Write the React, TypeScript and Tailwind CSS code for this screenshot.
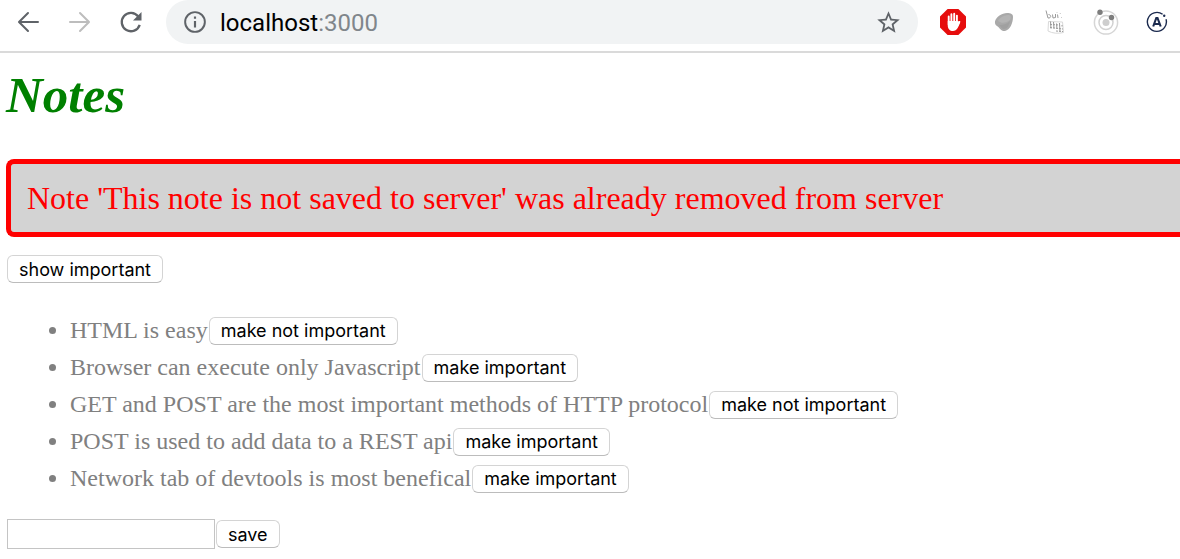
import React, { useState } from "react";

type Note = { id: number; content: string; important: boolean };

const initialNotes: Note[] = [
  { id: 1, content: "HTML is easy", important: true },
  { id: 2, content: "Browser can execute only Javascript", important: false },
  { id: 3, content: "GET and POST are the most important methods of HTTP protocol", important: true },
  { id: 4, content: "POST is used to add data to a REST api", important: false },
  { id: 5, content: "Network tab of devtools is most benefical", important: false },
];

function MaterialIcon({ d, className }: { d: string; className: string }) {
  return (
    <svg viewBox="0 0 24 24" fill="currentColor" className={className} aria-hidden="true">
      <path d={d} />
    </svg>
  );
}

function ArrowIcon({ d }: { d: string }) {
  return (
    <svg viewBox="0 0 28 28" fill="none" stroke="currentColor" strokeWidth="2" strokeLinecap="round" strokeLinejoin="round" className="size-7" aria-hidden="true">
      <path d={d} />
    </svg>
  );
}

function BlockerIcon() {
  return (
    <svg viewBox="0 0 26 26" className="size-[26px]" aria-hidden="true">
      <path d="M7.6 0h10.8L26 7.6v10.8L18.4 26H7.6L0 18.4V7.6z" fill="#e60d0d" />
      <g stroke="#fff" strokeWidth="1.900" strokeLinecap="round" fill="none">
        <path d="M8.700 7.500v8M11.400 5.200v9M14.200 4.800v9M16.900 6.600v9M17.400 16.500l2-3.600" />
      </g>
      <path d="M7.750 12h10.100l2.300 1.200c-.8 2-1.700 4.900-3.200 6.900-1 1.300-2.300 1.900-3.900 1.900-3.200 0-5.300-2.400-5.300-5.600z" fill="#fff" />
    </svg>
  );
}

function StoneIcon() {
  return (
    <svg viewBox="0 0 20 20" className="size-5" aria-hidden="true">
      <path d="M1 9.500C2 5 8 1 13 1c4 0 6 1 6 4 0 6-3 13-8 14-4 .5-5-3-8-5-1.500-1-2.300-2.500-2-4.500z" fill="#a9a9a9" />
      <path d="M4 9c2-4 7-6 11-6 2 0 2 3 1 5-4 3-8 4-12 1z" fill="#b4b4b4" />
      <path d="M5 13c4 0 8-1 11-4-1 5-3 8-6 8-2 0-3-2-5-4z" fill="#a0a0a0" />
    </svg>
  );
}

function SketchIcon() {
  return (
    <svg viewBox="0 0 20 26" className="h-[26px] w-5" fill="none" stroke="#9a9a9a" strokeWidth="1" aria-hidden="true">
      <path d="M1 1.500l2 7.500c3 .5 4-3 .5-3.500M7.500 5.500l.5 3.500 2.500-.5V5M12.500 5.500l.5 3.500M15 4l.3.600M16.500 8.500l.3.500M12 3.500v.500" />
      <path d="M3.500 12.500l14 .5 1 10.500c-5 1.300-11 1-15.500-1.500z" stroke="#d9d9d9" />
      <path d="M5.500 12.500l.5 7M8.500 13l.5 6.500M11.500 14.500l.500 5.500M14.500 14l.500 9" />
      <path d="M5 15.500l10 .5M5 18.500l13 1.500M11 22l7 .5M17 16v1.500" strokeDasharray="2 1" />
    </svg>
  );
}

function OrbitIcon() {
  return (
    <svg viewBox="0 0 26 26" className="size-[26px]" fill="none" aria-hidden="true">
      <circle cx="13" cy="13.500" r="11.600" stroke="#d6d6d6" strokeWidth="1.500" />
      <circle cx="13" cy="13.500" r="7" stroke="#d2d2d2" strokeWidth="1.500" />
      <circle cx="13" cy="13.500" r="3.500" fill="#cecece" />
      <circle cx="7" cy="3.300" r="2.700" fill="#7d7d7d" />
      <circle cx="18.500" cy="8.500" r="2.700" fill="#7d7d7d" />
    </svg>
  );
}

function ApolloIcon() {
  return (
    <svg viewBox="0 0 22 22" className="size-[22px]" fill="none" stroke="#1b2a4e" aria-hidden="true">
      <path d="M20 8.200A9.500 9.500 0 1 1 16.600 3.300" strokeWidth="1.400" />
      <circle cx="18.200" cy="4.700" r="1.200" fill="#1b2a4e" stroke="none" />
      <path d="M7.200 15.500L10.300 7h1.200l3.200 8.500M8.800 13h4.400" strokeWidth="2.100" />
    </svg>
  );
}

function BrowserBar() {
  return (
    <header className="flex h-[53px] items-start border-b-2 border-[#dadada] bg-white pr-[10px]">
      <div className="flex h-11 shrink-0 items-center gap-[23px] pl-[15px] pr-[21px]">
        <button aria-label="Back" className="text-[#5f6368]">
          <ArrowIcon d="M23 14H4.500M13 5l-9 9 9 9" />
        </button>
        <button aria-label="Forward" className="text-[#bdbdbd]">
          <ArrowIcon d="M4 14h18.500M14 5l9 9-9 9" />
        </button>
        <button aria-label="Reload" className="text-[#5f6368]">
          <svg viewBox="0 0 28 28" className="size-7" aria-hidden="true">
            <path d="M22.700 16.800A9.200 9.200 0 1 1 21.300 8.500" fill="none" stroke="currentColor" strokeWidth="2.300" />
            <path d="M24.500 4v8.500H16z" fill="currentColor" />
          </svg>
        </button>
      </div>
      <div className="flex h-11 min-w-0 flex-1 items-center rounded-full bg-[#f1f3f4] px-4">
        <MaterialIcon className="size-[26px] shrink-0 text-[#5f6368]" d="M11 17h2v-6h-2zm1-15a10 10 0 1 0 0 20 10 10 0 0 0 0-20zm0 18.200a8.200 8.200 0 1 1 0-16.400 8.200 8.200 0 0 1 0 16.400zM11 9h2V7h-2z" />
        <p className="min-w-0 flex-1 truncate pl-3 pt-px font-['Roboto',sans-serif] text-2xl text-black">
          localhost<span className="text-[#80868b]">:3000</span>
        </p>
        <button aria-label="Bookmark this page" className="text-[#5f6368]">
          <MaterialIcon className="size-[27px]" d="M22 9.240l-7.190-.62L12 2 9.190 8.630 2 9.240l5.460 4.730L5.820 21 12 17.270 18.180 21l-1.630-7.030zM12 15.400l-3.760 2.270 1-4.280-3.320-2.880 4.380-.38L12 6.100l1.710 4.040 4.380.38-3.320 2.880 1 4.280z" />
        </button>
      </div>
      <div className="flex h-11 shrink-0 items-center pl-[22px]">
        <div className="grid grid-cols-[26px_26px_26px_26px_26px] place-items-center gap-[25px]">
          <BlockerIcon />
          <StoneIcon />
          <SketchIcon />
          <OrbitIcon />
          <ApolloIcon />
        </div>
      </div>
    </header>
  );
}

function MacButton({ children, ...props }: React.ButtonHTMLAttributes<HTMLButtonElement>) {
  return (
    <button
      {...props}
      className="h-7 shrink-0 whitespace-nowrap rounded-md border border-[#d4d4d4] border-b-[#bcbcbc] bg-white px-[11px] pt-px font-['Inter',sans-serif] text-lg leading-6 text-black"
    >
      {children}
    </button>
  );
}

export default function App() {
  const [notes, setNotes] = useState(initialNotes);
  const [onlyImportant, setOnlyImportant] = useState(false);
  const [text, setText] = useState("");

  const toggle = (id: number) =>
    setNotes(notes.map((n) => (n.id === id ? { ...n, important: !n.important } : n)));

  const addNote = (event: React.FormEvent) => {
    event.preventDefault();
    if (!text) return;
    setNotes([...notes, { id: notes.length + 1, content: text, important: false }]);
    setText("");
  };

  const shown = onlyImportant ? notes.filter((n) => n.important) : notes;

  return (
    <div className="min-h-screen overflow-x-hidden bg-white font-['Liberation_Serif',serif]">
      <BrowserBar />
      <main className="pl-[6px]">
        <h1 className="pt-3 text-[51px] font-bold italic leading-[60px] text-[#008000]">Notes</h1>
        <div role="alert" className="mt-[34px] rounded-l-lg border-[5px] border-r-0 border-[#ff0000] bg-[#d3d3d3] p-4 text-[32px] leading-9 text-[#ff0000]">
          Note 'This note is not saved to server' was already removed from server
        </div>
        <div className="mt-[18px] flex pl-px">
          <MacButton onClick={() => setOnlyImportant(!onlyImportant)}>
            {onlyImportant ? "show all" : "show important"}
          </MacButton>
        </div>
        <ul className="mt-[29px] list-disc pl-16 text-2xl leading-[37px] text-[#808080]">
          {shown.map((note) => (
            <li key={note.id}>
              <div className="flex items-center gap-px">
                <span>{note.content}</span>
                <MacButton onClick={() => toggle(note.id)}>
                  {note.important ? "make not important" : "make important"}
                </MacButton>
              </div>
            </li>
          ))}
        </ul>
        <form onSubmit={addNote} className="mt-[22px] flex items-center gap-px pl-px">
          <input
            aria-label="New note"
            value={text}
            onChange={(e) => setText(e.target.value)}
            className="h-[30px] w-52 border border-[#c4c4c4] bg-white px-1 font-['Inter',sans-serif] text-lg text-black"
          />
          <MacButton type="submit">save</MacButton>
        </form>
      </main>
    </div>
  );
}
